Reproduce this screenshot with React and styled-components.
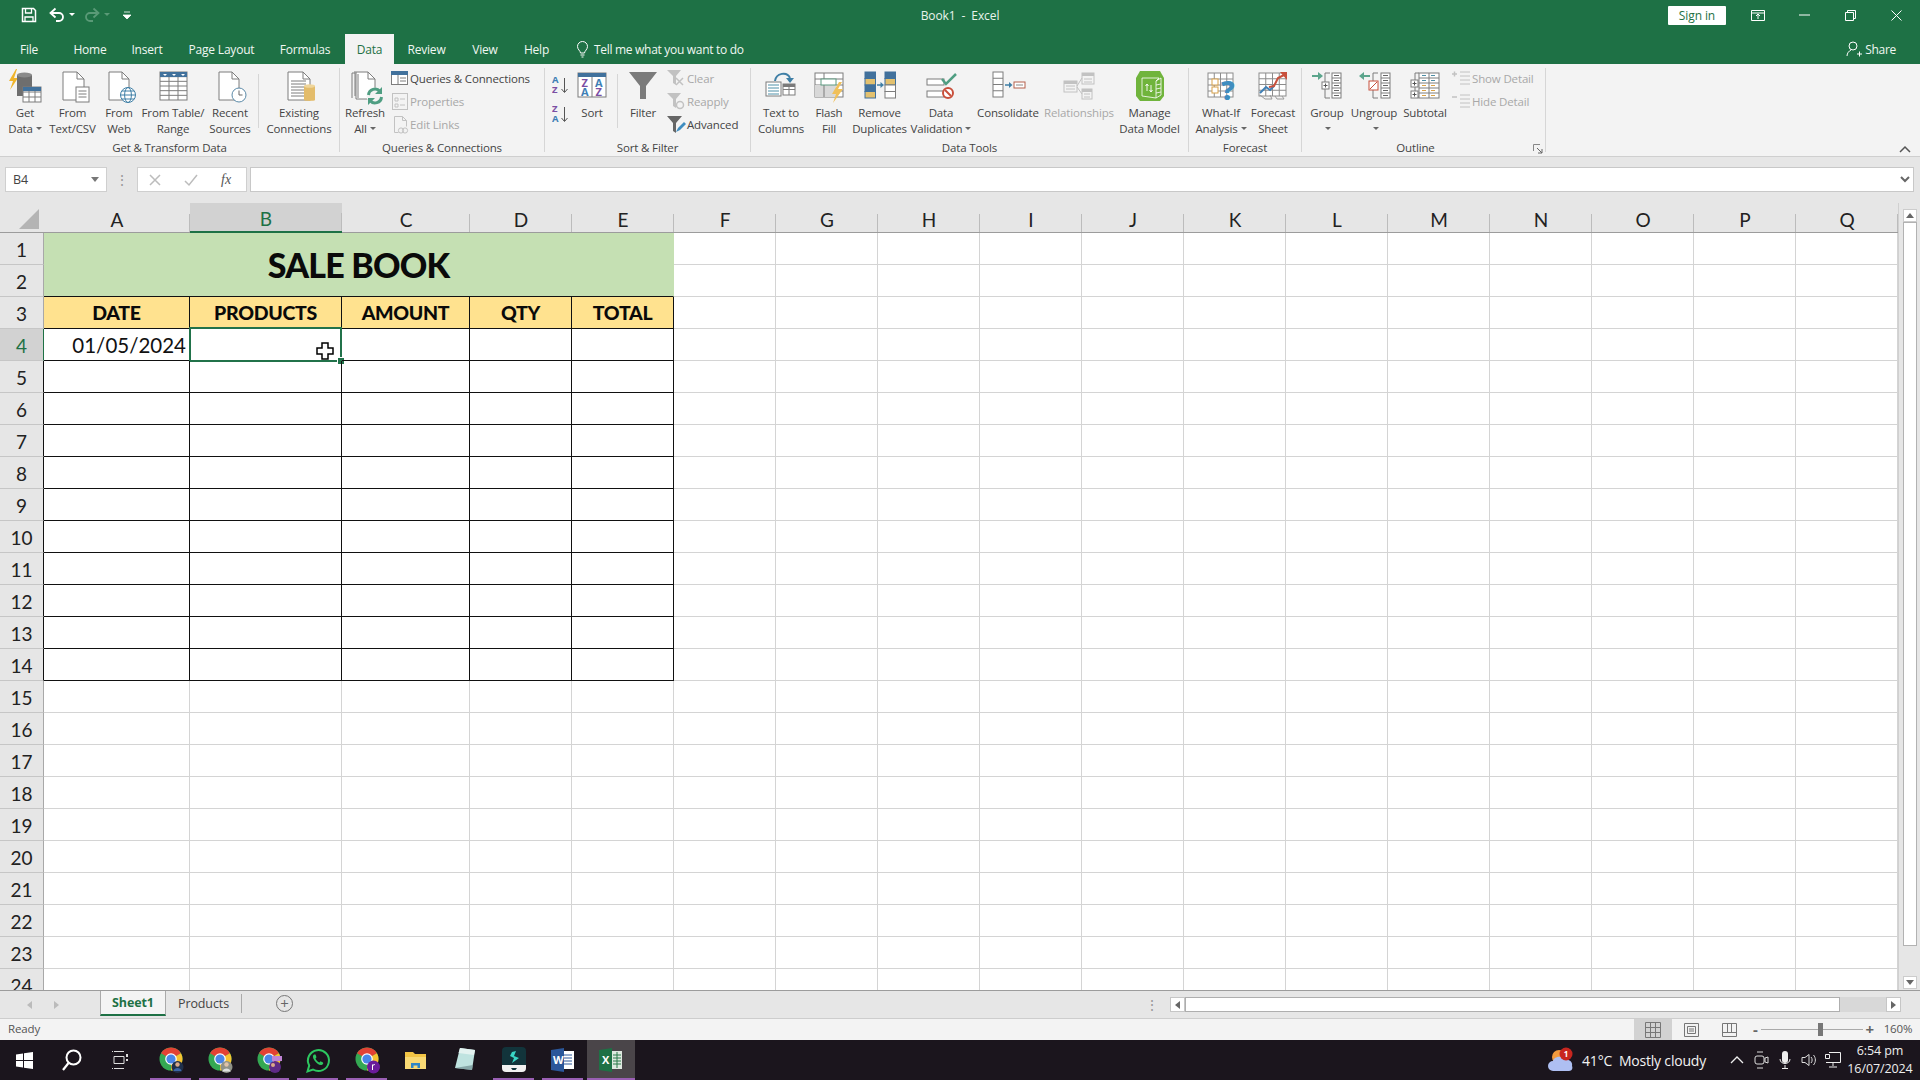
import React from 'react';
import styled, { createGlobalStyle } from 'styled-components';

const UI = `"Open Sans", "Noto Sans", sans-serif`;
const SHEET = `Lato, "Open Sans", sans-serif`;
const GREEN = '#1e7145';
const LINE = '#7d7d7d';
const OFF = '#c2c2c2';
const BLUE = '#41719c';

const Global = createGlobalStyle`
  html, body { margin: 0; padding: 0; width: 1920px; height: 1080px; overflow: hidden; background: #fff; }
  * { box-sizing: border-box; }
`;

const Page = styled.div`
  width: 1920px; height: 1080px; display: flex; flex-direction: column;
  font-family: ${UI}; color: #333; overflow: hidden;
`;

/* ---------- title bar ---------- */
const TitleBar = styled.header`
  height: 34px; background: ${GREEN}; color: #fff; display: grid;
  grid-template-columns: 1fr auto 1fr; align-items: center; padding-bottom: 4px;
`;
const Quick = styled.div`display: flex; align-items: center; padding-left: 21px;`;
const DocName = styled.div`font-size: 12px; letter-spacing: -.1px; color: #e8f3ec; white-space: pre;`;
const WindowTools = styled.div`display: flex; align-items: center; justify-content: flex-end; padding-right: 1px;`;
const SignIn = styled.button`
  width: 58px; height: 19px; margin-right: 9px; border: 0; border-radius: 1px; background: #fff; color: ${GREEN};
  font: 12px ${UI}; letter-spacing: -.1px; padding: 0;
`;
const WinBtn = styled.div`width: 46px; height: 30px; display: flex; align-items: center; justify-content: center;`;

/* ---------- tab strip ---------- */
const TabStrip = styled.nav`height: 30px; background: ${GREEN}; display: flex; align-items: stretch;`;
const Tab = styled.div`
  width: ${p => p.$w}px; margin-right: ${p => p.$gap || 0}px; display: flex; align-items: center; justify-content: center;
  font-size: 12px; letter-spacing: -.2px; padding-top: 1px;
  color: ${p => (p.$on ? GREEN : '#f0f7f2')}; background: ${p => (p.$on ? '#f3f3f3' : 'transparent')};
`;
const TellMe = styled.div`display: flex; align-items: center; gap: 6px; margin-left: 15px; font-size: 12px; letter-spacing: -.3px; color: #f0f7f2;`;
const Share = styled.div`margin-left: auto; margin-right: 24px; display: flex; align-items: center; gap: 3px; color: #f0f7f2; font-size: 12px; letter-spacing: -.3px;`;

/* ---------- ribbon ---------- */
const Ribbon = styled.section`
  height: 93px; flex: none; background: #f3f3f3; border-bottom: 1px solid #cfcfcf; padding-top: 4px; display: flex; position: relative;
`;
const Group = styled.div`
  width: ${p => p.$w}px; height: 84px; flex: none; border-right: 1px solid #d6d6d6; padding-left: ${p => p.$pad || 0}px; display: flex; flex-direction: column;
`;
const GroupBody = styled.div`height: 72px; display: flex; align-items: flex-start;`;
const GroupLabel = styled.div`
  height: 12px; line-height: 16px; text-align: center; font-size: 11.5px; letter-spacing: -.15px; color: #444;
  margin-left: ${p => (p.$pad ? -p.$pad : 0)}px; padding-right: ${p => p.$right || 0}px; white-space: nowrap;
`;
const Big = styled.div`
  width: ${p => p.$w}px; flex: none; display: flex; flex-direction: column; align-items: center; margin-left: ${p => p.$ml || 0}px;
`;
const BigText = styled.div`
  font-size: 11.5px; line-height: 16px; letter-spacing: -.15px; text-align: center; white-space: nowrap;
  color: ${p => (p.$off ? '#a8a8a8' : '#444')};
`;
const Caret = styled.span`
  display: inline-block; width: 0; height: 0; margin: 0 0 2px 3px; vertical-align: middle;
  border-left: 3px solid transparent; border-right: 3px solid transparent; border-top: 3px solid #666;
`;
const RibbonRule = styled.div`width: 1px; height: 54px; margin: 6px ${p => p.$m || 2}px 0; background: #d6d6d6; flex: none;`;
const SmallCol = styled.div`display: flex; flex-direction: column; margin: -1px 0 0 ${p => p.$ml || 0}px;`;
const Small = styled.div`
  height: 23px; display: flex; align-items: center; font-size: 11.5px; letter-spacing: -.15px; white-space: nowrap;
  color: ${p => (p.$off ? '#a8a8a8' : '#444')};
`;
const SortCol = styled.div`display: flex; flex-direction: column; gap: 7px; margin: 6px 1px 0 7px;`;
const Chevron = styled.div`position: absolute; right: 8px; bottom: 2px; width: 14px; height: 10px;`;
const Launcher = styled.svg`position: absolute; left: 1533px; top: 80px; width: 10px; height: 10px;`;

const Ico = styled.svg.attrs({ viewBox: '0 0 48 37', fill: 'none' })`width: 48px; height: 37px; flex: none; overflow: visible;`;
const Sm = styled.svg.attrs({ viewBox: '0 0 20 20', fill: 'none' })`width: 20px; height: 20px; flex: none; overflow: visible;`;

/* ---------- formula bar ---------- */
const FormulaBar = styled.div`height: 46px; flex: none; background: #e6e6e6; padding: 10px 6px 11px 5px; display: flex; align-items: stretch;`;
const NameBox = styled.div`
  width: 102px; background: #fff; border: 1px solid #cfcfcf; display: flex; align-items: center; justify-content: space-between;
  padding: 0 7px; font-size: 12.5px; color: #444;
`;
const Grip = styled.div`width: 30px; display: flex; align-items: center; justify-content: center; color: #999; font-size: 14px;`;
const FxBox = styled.div`
  width: 110px; background: #fff; border: 1px solid #cfcfcf; display: flex; align-items: center; gap: 23px; padding-left: 11px;
`;
const FxLabel = styled.span`font: italic 14px "Liberation Serif", serif; color: #555;`;
const FormulaInput = styled.div`flex: 1; margin-left: 3px; background: #fff; border: 1px solid #c8c8c8; display: flex; align-items: center; justify-content: flex-end; padding-right: 2px;`;

/* ---------- sheet ---------- */
const SheetWrap = styled.div`height: 787px; flex: none; display: flex; background: #fff; overflow: hidden;`;
const Grid = styled.div`
  width: 1898px; flex: none; display: grid; height: 787px; overflow: hidden; font-family: ${SHEET};
  grid-template-columns: 44px 146px 152px 128px repeat(14, 102px);
  grid-template-rows: 30px repeat(24, 32px);
`;
const Corner = styled.div`background: #e6e6e6; border-bottom: 1px solid #9c9c9c; display: flex; align-items: flex-end; justify-content: flex-end; padding: 0 3px 3px 0;`;
const ColHead = styled.div`
  display: flex; align-items: center; justify-content: center; padding-top: 3px; font-size: 19px;
  background-color: ${p => (p.$on ? '#d2d2d2' : '#e6e6e6')};
  background-image: linear-gradient(#bcbcbc, #bcbcbc); background-size: 1px 18px; background-position: right bottom; background-repeat: no-repeat;
  color: ${p => (p.$on ? GREEN : '#222')};
  border-bottom: ${p => (p.$on ? `2px solid ${GREEN}` : '1px solid #9c9c9c')};
`;
const RowHead = styled.div`
  display: flex; align-items: center; justify-content: center; font-size: 19px; padding-top: 1px;
  background: ${p => (p.$on ? '#d2d2d2' : '#e6e6e6')}; color: ${p => (p.$on ? GREEN : '#222')};
  border-bottom: 1px solid #c6c6c6;
  border-right: 1px solid ${p => (p.$on ? GREEN : p.$ink ? '#111' : '#a8a8a8')};
`;
const Cell = styled.div`
  border-right: 1px solid ${p => (p.$ink ? '#111' : '#d4d4d4')};
  border-bottom: 1px solid ${p => (p.$ink ? '#111' : '#d4d4d4')};
  position: relative; display: flex; align-items: center; justify-content: flex-end; padding-right: 3px;
  font-size: 20.5px; color: #111;
`;
const Title = styled.div`
  grid-column: 2 / span 5; grid-row: span 2; background: #c5e0b3; border-bottom: 1px solid #111; border-right: 1px solid #c5e0b3;
  display: flex; align-items: center; justify-content: center; font-size: 34px; font-weight: 900; color: #0a0a0a; letter-spacing: -.8px;
`;
const ColTitle = styled.div`
  background: #ffe28f; border-right: 1px solid #111; border-bottom: 1px solid #111;
  display: flex; align-items: center; justify-content: center; font-size: 19.5px; font-weight: 900; color: #0a0a0a; letter-spacing: -.3px;
`;
const Selection = styled.div`position: absolute; left: -1px; top: -2px; right: -1px; bottom: -2px; border: 2px solid #21724a;`;
const Handle = styled.div`position: absolute; right: -4px; bottom: -4px; width: 6px; height: 6px; background: #21724a; border: 1px solid #fff; box-sizing: content-box; margin: -1px;`;
const Cursor = styled.svg`position: absolute; left: 126px; top: 13px; width: 18px; height: 18px;`;

const VScroll = styled.div`width: 22px; flex: none; background: #e6e6e6; border-left: 1px solid #d0d0d0; padding: 6px 3px 1px 4px; display: flex; flex-direction: column; align-items: stretch;`;
const ScrollBtn = styled.div`height: 13px; background: #fff; border: 1px solid #ccc; display: flex; align-items: center; justify-content: center;`;
const VThumb = styled.div`height: 724px; background: #fff; border: 1px solid #b2b2b2;`;
const VTrack = styled.div`flex: 1;`;

/* ---------- sheet tabs ---------- */
const TabsBar = styled.div`height: 29px; flex: none; background: #e6e6e6; border-top: 1px solid #9c9c9c; border-bottom: 1px solid #cdcdcd; display: flex; align-items: stretch; color: #555;`;
const NavArrows = styled.div`width: 100px; display: flex; align-items: center; gap: 22px; padding-left: 27px;`;
const SheetTab = styled.div`
  width: ${p => p.$w}px; height: 25px; display: flex; align-items: center; justify-content: center; font-size: 12.5px; letter-spacing: -.1px;
  ${p => (p.$on
    ? `background:#f4f4f4; color:${GREEN}; font-weight:700; border-bottom:2px solid ${GREEN}; border-left:1px solid #aaa; border-right:1px solid #aaa;`
    : 'color:#444; border-right:1px solid #aaa; height: 19px; margin-top: 3px;')}
`;
const AddSheet = styled.div`margin-left: 34px; width: 17px; height: 17px; margin-top: 4px; border: 1.5px solid #777; border-radius: 50%; display: flex; align-items: center; justify-content: center; font-size: 15px; line-height: 1; color: #666; font-weight: 400;`;
const HDots = styled.div`margin-left: auto; margin-right: 9px; width: 18px; display: flex; align-items: center; justify-content: center; color: #999; font-size: 14px;`;
const HScroll = styled.div`width: 731px; height: 15px; margin: 6px 19px 0 0; display: flex;`;
const HBtn = styled.div`width: ${p => p.$w}px; background: #fff; border: 1px solid #c6c6c6; display: flex; align-items: center; justify-content: center;`;
const HThumb = styled.div`width: 655px; background: #fff; border: 1px solid #aeaeae;`;
const HTrack = styled.div`flex: 1; background: #d8d8d8;`;
const Tri = styled.span`
  width: 0; height: 0; border-top: 4px solid transparent; border-bottom: 4px solid transparent;
  ${p => (p.$dir === 'l' ? `border-right: 5px solid ${p.$c || '#666'};` : `border-left: 5px solid ${p.$c || '#666'};`)}
`;

/* ---------- status bar ---------- */
const Status = styled.div`height: 21px; flex: none; background: #f3f3f3; display: flex; align-items: center; font-size: 11.5px; letter-spacing: -.15px; color: #555;`;
const Ready = styled.span`margin-left: 8px; padding-bottom: 3px;`;
const Views = styled.div`margin-left: auto; display: flex; align-items: stretch; height: 100%;`;
const ViewBtn = styled.div`width: 38px; display: flex; align-items: center; justify-content: center; background: ${p => (p.$on ? '#d2d2d2' : 'transparent')};`;
const ZoomCtl = styled.div`display: flex; align-items: center; margin-left: 5px; width: 121px; gap: 3px;`;
const ZoomSign = styled.span`font-size: 15px; font-weight: 700; color: #666; line-height: 1;`;
const ZoomTrack = styled.div`flex: 1; height: 1px; background: #aaa; position: relative;`;
const ZoomKnob = styled.div`position: absolute; left: 57px; top: -6px; width: 5px; height: 13px; background: #777;`;
const ZoomPct = styled.span`width: 36px; margin: 0 4px 2px 6px; align-self: center; text-align: center; font-size: 11.5px;`;

/* ---------- taskbar ---------- */
const Taskbar = styled.footer`height: 40px; flex: none; background: #1b151d; display: flex; align-items: stretch; color: #eee;`;
const Slot = styled.div`
  width: ${p => p.$w || 49}px; flex: none; display: flex; align-items: center; justify-content: center; position: relative;
  background: ${p => (p.$on ? '#4a4549' : 'transparent')};
  ${p => p.$run && `&::after { content: ''; position: absolute; bottom: 0; left: ${p.$on ? 0 : 4}px; right: ${p.$on ? 0 : 4}px; height: 2px; background: #9a5fb4; }`}
`;
const SlotGap = styled.div`width: 2px; flex: none;`;
const Tray = styled.div`margin-left: auto; display: flex; align-items: center; height: 100%;`;
const Weather = styled.div`display: flex; align-items: center; gap: 8px; font-size: 14px; letter-spacing: -.2px; color: #f2f2f2; margin-right: 21px;`;
const TrayIcons = styled.div`display: flex; align-items: center; gap: 4px;`;
const TrayBox = styled.div`width: 20px; display: flex; justify-content: center;`;
const Clock = styled.div`display: flex; flex-direction: column; align-items: center; font-size: 12.5px; line-height: 18px; width: 74px; margin-right: 3px; letter-spacing: -.1px;`;

/* ---------- icon helpers ---------- */
function Tbl({ x, y, w, h, cols = 1, rows = 1, c = LINE, fill = '#fff', head }) {
  const ls = [];
  for (let i = 1; i < cols; i++) ls.push(<path key={`c${i}`} d={`M${x + (w * i) / cols} ${y}v${h}`} />);
  for (let i = 1; i < rows; i++) ls.push(<path key={`r${i}`} d={`M${x} ${y + (h * i) / rows}h${w}`} />);
  return (
    <g stroke={c} strokeWidth="1">
      <rect x={x} y={y} width={w} height={h} fill={fill} />
      {ls}
      {head && <rect x={x} y={y} width={w} height={h / rows} fill={head} stroke={head} />}
    </g>
  );
}
function Doc({ x, y, w, h, c = LINE }) {
  return (
    <g stroke={c}>
      <path d={`M${x} ${y}h${w - 7}l7 7v${h - 7}h${-w}z`} fill="#fff" />
      <path d={`M${x + w - 7} ${y}v7h7`} />
    </g>
  );
}
const Lines = ({ x, y, w, n, step = 3, c = LINE }) => (
  <g stroke={c}>
    {Array.from({ length: n }, (_, i) => <path key={i} d={`M${x} ${y + i * step}h${w}`} />)}
  </g>
);

const GetDataIcon = () => (
  <Ico>
    <path d="M15 1 8 13h4l-3 9 8-12h-4l3-9z" fill="#f0b429" />
    <path d="M16 7v21h15V7z" fill="#6e6e6e" />
    <ellipse cx="23.5" cy="7" rx="7.5" ry="2.6" fill="#8a8a8a" />
    <Tbl x={22} y={19} w={18} h={15} cols={3} rows={3} />
    <rect x="22" y="19" width="18" height="4" fill={BLUE} />
  </Ico>
);
const TextCsvIcon = () => (
  <Ico>
    <Doc x={14} y={4} w={21} h={28} />
    <rect x="27" y="19" width="13" height="15" fill="#fff" stroke={LINE} />
    <Lines x={29.5} y={23} w={8} n={3} />
  </Ico>
);
const WebIcon = () => (
  <Ico>
    <Doc x={14} y={4} w={20} h={28} />
    <circle cx="33" cy="27" r="7.5" fill="#fff" stroke="#3f7fa6" />
    <ellipse cx="33" cy="27" rx="3.4" ry="7.5" stroke="#3f7fa6" />
    <path d="M25.5 27h15M27 23h12M27 31h12" stroke="#3f7fa6" />
  </Ico>
);
const TableIcon = () => (
  <Ico>
    <Tbl x={11} y={4} w={27} h={28} cols={3} rows={6} />
    <rect x="11" y="4" width="27" height="5" fill={BLUE} />
    <path d="M14 6h4l-2 2zM23 6h4l-2 2zM32 6h4l-2 2z" fill="#fff" />
  </Ico>
);
const RecentIcon = () => (
  <Ico>
    <Doc x={13} y={4} w={20} h={28} />
    <circle cx="33" cy="27" r="7" fill="#fff" stroke="#5b8aa8" />
    <path d="M33 22.5V27h3.5" stroke="#666" />
  </Ico>
);
const ExistingIcon = () => (
  <Ico>
    <Doc x={13} y={4} w={22} h={28} />
    <Lines x={16} y={13} w={15} n={6} />
    <path d="M29 18v14c0 1.2 11 1.2 11 0V18z" fill="#e3bc6b" />
    <ellipse cx="34.5" cy="18" rx="5.5" ry="1.8" fill="#efd59a" />
  </Ico>
);
const RefreshIcon = () => (
  <Ico>
    <path d="M11 5v25M11 5h3M14 3v25" stroke={LINE} />
    <Doc x={15} y={4} w={19} h={27} />
    <path d="M17 6v24" stroke={LINE} />
    <circle cx="34" cy="28" r="8.5" fill="#f3f3f3" />
    <path d="M27.5 27a6.5 6.5 0 0 1 11.5-3.5M40.5 29a6.5 6.5 0 0 1-11.5 3.5" stroke="#4f9e82" strokeWidth="3" />
    <path d="M41 19v7h-7zM27 37v-7h7z" fill="#4f9e82" />
  </Ico>
);
const SortLetters = styled.text`font: 700 11px ${UI};`;
const SortIcon = () => (
  <Ico>
    <rect x="10" y="5" width="28" height="24" fill="#fff" stroke={LINE} />
    <rect x="10" y="5" width="28" height="4" fill={BLUE} />
    <path d="M24 9v20" stroke={LINE} />
    <SortLetters x="13.5" y="18.5" fill="#7b4fa3">Z</SortLetters>
    <SortLetters x="27" y="18.5" fill="#3f7fb5">A</SortLetters>
    <SortLetters x="13" y="28" fill="#3f7fb5">A</SortLetters>
    <SortLetters x="27.5" y="28" fill="#7b4fa3">Z</SortLetters>
  </Ico>
);
const AzSvg = styled.svg.attrs({ viewBox: '0 0 18 22', fill: 'none' })`width: 18px; height: 22px; display: block;`;
const AzText = styled.text`font: 700 9.5px ${UI};`;
const AzIcon = ({ top, bottom, tc, bc }) => (
  <AzSvg>
    <AzText x="0" y="9" fill={tc}>{top}</AzText>
    <AzText x="0" y="19" fill={bc}>{bottom}</AzText>
    <path d="M12.5 4v14M9.5 15l3 3.5 3-3.5" stroke="#555" />
  </AzSvg>
);
const FilterIcon = () => (
  <Ico><path d="M10 4h28L27 18v13h-6V18z" fill="#7b7b7b" /></Ico>
);
const TextColsIcon = () => (
  <Ico>
    <path d="M18 13c1-8 12-10 15-3" stroke="#3f7fa6" strokeWidth="2" />
    <path d="M29 10h8l-4 5z" fill="#3f7fa6" />
    <rect x="9" y="14" width="15" height="14" fill="#fff" stroke={LINE} />
    <Lines x={11} y={17} w={11} n={4} c="#4f90a8" />
    <Tbl x={26} y={16} w={12} h={11} cols={2} rows={2} />
    <rect x="26" y="16" width="12" height="3" fill="#7a7a7a" />
  </Ico>
);
const FlashIcon = () => (
  <Ico>
    <Tbl x={10} y={5} w={28} h={24} cols={1} rows={4} />
    <rect x="10" y="17" width="21" height="12" fill="#d8d8d8" />
    <path d="M19 5v24" stroke={LINE} />
    <rect x="16" y="11" width="15" height="6" fill="#fff" stroke="#5c9a80" />
    <path d="M34 14l-7 12h4l-3 9 10-14h-5l4-7z" fill="#f0c05a" />
  </Ico>
);
const ColStack = ({ x, y = 4, w = 10.5, colors }) => (
  <g>
    {colors.map((c, i) => <rect key={i} x={x} y={y + i * 6.5} width={w} height={6.5} fill={c} stroke={c === '#fff' ? LINE : '#41719c'} />)}
  </g>
);
const DupIcon = () => (
  <Ico>
    <ColStack x={9} colors={[BLUE, '#e3c16f', BLUE, '#e3c16f']} />
    <ColStack x={29} colors={[BLUE, '#e3c16f', '#fff', '#fff']} />
    <path d="M21 17h5" stroke="#3f7fa6" strokeWidth="1.5" />
    <path d="M24.5 14l3.5 3-3.5 3z" fill="#3f7fa6" />
  </Ico>
);
const ValidIcon = () => (
  <Ico>
    <rect x="10" y="11" width="17" height="6" fill="#fff" stroke={LINE} />
    <rect x="10" y="23" width="17" height="6" fill="#fff" stroke={LINE} />
    <path d="M25 11l4 5 10-10" stroke="#4f9e82" strokeWidth="2.5" />
    <circle cx="31" cy="25" r="5" fill="#fff" stroke="#c8503c" strokeWidth="2" />
    <path d="M28 22l6 6" stroke="#c8503c" strokeWidth="2" />
  </Ico>
);
const ConsolIcon = () => (
  <Ico>
    <Tbl x={9} y={4} w={10} h={25} rows={4} />
    <path d="M21 17h5" stroke="#3f7fa6" strokeWidth="1.5" />
    <path d="M25 14l3.5 3-3.5 3z" fill="#3f7fa6" />
    <rect x="30" y="14" width="11" height="6" fill="#fff" stroke="#b5604c" />
    <path d="M32 17h7" stroke="#888" />
  </Ico>
);
const RelIcon = () => (
  <Ico>
    <g stroke={OFF}>
      <rect x="9" y="13" width="13" height="11" fill="#f3f3f3" />
      <path d="M11 18h9M11 21h9" />
      <rect x="27" y="5" width="12" height="11" fill="#f3f3f3" />
      <path d="M29 11h8M29 14h8" />
      <rect x="27" y="21" width="10" height="10" fill="#f3f3f3" />
      <path d="M29 26h6M29 29h6" />
      <path d="M22 18l5-8M22 19l5 7" />
    </g>
    <rect x="27" y="5" width="12" height="3" fill={OFF} />
    <rect x="9" y="13" width="13" height="3" fill={OFF} />
    <rect x="27" y="21" width="10" height="3" fill={OFF} />
  </Ico>
);
const ModelIcon = () => (
  <Ico>
    <path d="M14 3h20l4 7v18l-4 5H14l-4-5V10z" fill="#70b43c" />
    <path d="M16 10h17l-3 3v17l-14-2zM30 13l5-3v17l-5 3" stroke="#fff" strokeWidth=".8" />
    <path d="M30 17l5-1M30 21l5-1M30 25l5-1" stroke="#fff" strokeWidth=".8" />
    <path d="M21 16v7M25 24v-7M19.5 18l1.5-2 1.5 2M23.5 22l1.5 2 1.5-2" stroke="#fff" strokeWidth=".9" />
  </Ico>
);
const QMark = styled.text`font: 800 27px ${UI};`;
const WhatIfIcon = () => (
  <Ico>
    <Tbl x={11} y={5} w={25} h={24} cols={4} rows={4} c="#8c8c8c" />
    <rect x="15" y="11" width="6" height="6" fill="#fff" stroke="#d9a24a" />
    <rect x="15" y="19" width="6" height="6" fill="#fff" stroke="#d9a24a" />
    <QMark x="24" y="32" fill="#3f8dc0">?</QMark>
  </Ico>
);
const ForecastIcon = () => (
  <Ico>
    <Tbl x={10} y={5} w={27} h={23} cols={4} rows={4} c="#8c8c8c" />
    <path d="M11 27l5 4h7l-2-4M26 28l2 3h7l-2-3" stroke="#9a9a9a" />
    <path d="M11 25l6-6 4 3 4-4" stroke="#3f7fb5" strokeWidth="2" />
    <path d="M20 19l5-1 4-8 6-3" stroke="#c8503c" strokeWidth="2" />
    <path d="M31 4h7v8z" fill="#c8503c" />
  </Ico>
);
const Bracket = ({ x, y = 5, h = 25 }) => (
  <path d={`M${x + 5} ${y}h-5v${h}h5`} stroke={LINE} />
);
const Stack = ({ x, w = 9, y = 5, n = 5 }) => (
  <g stroke={LINE}>
    <rect x={x} y={y} width={w} height={n * 5} fill="#fff" />
    {Array.from({ length: n - 1 }, (_, i) => <path key={i} d={`M${x} ${y + 5 * (i + 1)}h${w}`} />)}
    {Array.from({ length: n }, (_, i) => <path key={`d${i}`} d={`M${x + 2} ${y + 2.5 + 5 * i}h${w - 4}`} stroke="#666" />)}
  </g>
);
const GroupIcon = () => (
  <Ico>
    <path d="M9 8h8" stroke="#5ba58c" strokeWidth="2" />
    <path d="M15 4l5 4-5 4z" fill="#5ba58c" />
    <Bracket x={22} />
    <rect x="19" y="14" width="7" height="7" fill="#fff" stroke={LINE} />
    <path d="M20.5 17.5h4M22.5 15.5v4" stroke="#555" />
    <Stack x={29} />
  </Ico>
);
const UngroupIcon = () => (
  <Ico>
    <path d="M12 8h8" stroke="#5ba58c" strokeWidth="2" />
    <path d="M14 4l-5 4 5 4z" fill="#5ba58c" />
    <Bracket x={23} />
    <rect x="19" y="13" width="9" height="9" fill="#fff" stroke="#c8503c" />
    <path d="M20 21l7-7" stroke="#c8503c" />
    <Stack x={31} />
  </Ico>
);
const SubtotalIcon = () => (
  <Ico>
    <path d="M14 5v24h4M14 5h4" stroke={LINE} />
    <rect x="10" y="12" width="7" height="7" fill="#fff" stroke={LINE} />
    <rect x="10" y="23" width="7" height="7" fill="#fff" stroke={LINE} />
    <path d="M11.5 15.5h4M13.5 13.5v4M11.5 26.5h4M13.5 24.5v4" stroke="#555" />
    <Tbl x={18} y={5} w={20} h={25} cols={2} rows={5} />
    <path d="M21 7.5h4M30 7.5h4M21 12.5h4M30 12.5h4" stroke="#4f8fa6" />
    <path d="M21 17.5h4M30 17.5h4M21 22.5h4M30 22.5h4M21 27.5h4M30 27.5h4" stroke="#d9a24a" />
  </Ico>
);
const QueriesSm = () => (
  <Sm>
    <rect x="1.5" y="2.5" width="16" height="13" fill="#fff" stroke={LINE} />
    <rect x="1.5" y="2.5" width="16" height="3" fill={BLUE} stroke={BLUE} />
    <path d="M8 6v9M10 9h6M10 12h6" stroke={LINE} />
  </Sm>
);
const PropsSm = () => (
  <Sm>
    <rect x="2.5" y="1.5" width="15" height="16" stroke={OFF} />
    <path d="M5 6h3v3H5zM5 12h3v3H5zM10 7h5M10 13h5" stroke={OFF} />
  </Sm>
);
const LinksSm = () => (
  <Sm>
    <path d="M4.5 1.5h8l4 4v6M4.5 1.5v16h4" stroke={OFF} />
    <path d="M12.5 1.5v4h4" stroke={OFF} />
    <circle cx="11" cy="15.5" r="2.6" stroke={OFF} />
    <circle cx="15" cy="15.5" r="2.6" stroke={OFF} />
  </Sm>
);
const ClearSm = () => (
  <Sm>
    <path d="M0 1h14L9 7v9l-3-2V7z" fill={OFF} />
    <path d="M9 9l7 7M16 9l-7 7" stroke={OFF} strokeWidth="1.5" />
  </Sm>
);
const ReapplySm = () => (
  <Sm>
    <path d="M0 1h14L9 7v9l-3-2V7z" fill={OFF} />
    <circle cx="13" cy="13" r="3.5" stroke={OFF} strokeWidth="1.5" />
  </Sm>
);
const AdvancedSm = () => (
  <Sm>
    <path d="M0 1h15L9 8v10l-3-2V8z" fill="#666" />
    <path d="M9 17l2-4 6-6 2 2-6 6z" fill="#3f8dc0" />
  </Sm>
);
const ShowSm = () => (
  <Sm>
    <path d="M8 3h10M8 7h10M8 11h10M8 15h10" stroke={OFF} />
    <path d="M0 5h5M2.5 2.5v5" stroke={OFF} strokeWidth="1.5" />
  </Sm>
);
const HideSm = () => (
  <Sm>
    <path d="M8 3h10M8 7h10M8 11h10M8 15h10" stroke={OFF} />
    <path d="M0 5h5" stroke={OFF} strokeWidth="1.5" />
  </Sm>
);

/* ---------- top-level small svg ---------- */
const S = styled.svg.attrs(p => ({ viewBox: `0 0 ${p.$w} ${p.$h}`, fill: 'none' }))`
  width: ${p => p.$w}px; height: ${p => p.$h}px; flex: none; display: block; overflow: visible;
`;
const Qat = styled.div`display: flex; align-items: center; gap: 4px; width: ${p => p.$w}px; justify-content: ${p => p.$mid ? 'center' : 'flex-start'};`;

const SaveIcon = () => (
  <S $w={16} $h={16}>
    <path d="M1.5 1.5h11l2 2v11h-13z" stroke="#fff" strokeWidth="1.5" />
    <path d="M4.5 2v4h6V2M4 15v-5h8v5" stroke="#fff" strokeWidth="1.3" />
  </S>
);
const UndoIcon = ({ c }) => (
  <S $w={16} $h={16}>
    <path d="M3 6h7a3.5 3.5 0 0 1 0 8H7" stroke={c} strokeWidth="1.8" />
    <path d="M6.5 1.500 1.500 6l5 4.500" stroke={c} strokeWidth="1.8" />
  </S>
);
const RedoIcon = ({ c }) => (
  <S $w={16} $h={16}>
    <path d="M13 6H6a3.5 3.5 0 0 0 0 8h3" stroke={c} strokeWidth="1.8" />
    <path d="M9.5 1.5l5 4.5-5 4.5" stroke={c} strokeWidth="1.8" />
  </S>
);
const MiniCaret = ({ c }) => (
  <S $w={7} $h={4}><path d="M0 0h6L3 3z" fill={c} /></S>
);

const ChromeIcon = ({ badge }) => (
  <S $w={24} $h={26}>
    <circle cx="12" cy="12" r="11.5" fill="#34a853" />
    <path d="M12 12 2.05 6.25A11.5 11.5 0 0 1 21.95 6.25Z" fill="#e34234" />
    <path d="M12 12 21.95 6.25A11.5 11.5 0 0 1 12 23.5Z" fill="#f7c331" />
    <circle cx="12" cy="12" r="5.8" fill="#fff" />
    <circle cx="12" cy="12" r="4.6" fill="#4a86e8" />
    {badge === 'a' && (<g><circle cx="18.5" cy="20" r="6" fill="#20304a" /><circle cx="18.5" cy="17.5" r="2.2" fill="#d9a98a" /><path d="M14.5 24c.5-4 7.5-4 8 0z" fill="#3c66a8" /></g>)}
    {badge === 'b' && (<g><circle cx="18.5" cy="20" r="6" fill="#8f9288" /><circle cx="18.5" cy="17.5" r="2.2" fill="#e0c3a8" /><path d="M14.5 24.5c.5-4 7.5-4 8 0z" fill="#dfe2e0" /></g>)}
    {badge === 'c' && (<g><circle cx="18" cy="20" r="6" fill="#5e2a86" /><rect x="15" y="9" width="10" height="5" fill="#c184d6" /><circle cx="16" cy="18" r="2" fill="#d9a98a" /></g>)}
    {badge === 'r' && (<g><circle cx="18.5" cy="20" r="6.5" fill="#6a1b9a" /><path d="M17.5 23v-5.5M17.5 19c.6-1.2 1.500-1.500 2.500-1.400" stroke="#fff" /></g>)}
  </S>
);
const WinLogo = () => (
  <S $w={17} $h={17}><path d="M0 2.4 7 1.4v6.6H0zM8 1.2 17 0v8H8zM0 9h7v6.6l-7-1zM8 9h9v8l-9-1.2z" fill="#fff" /></S>
);
const SearchIcon = () => (
  <S $w={20} $h={22}><circle cx="11.5" cy="8.5" r="7" stroke="#fff" strokeWidth="2" /><path d="M6.5 14 1 21" stroke="#fff" strokeWidth="2.2" /></S>
);
const TaskView = () => (
  <S $w={17} $h={18}><path d="M2 .5h10M2 17.5h10M2 5.5h10v7H2zM0 .5h1M0 17.5h1" stroke="#ddd" /><path d="M14 3h2v3h-2zM14 8h2v2h-2z" fill="#ddd" /></S>
);
const WhatsApp = () => (
  <S $w={24} $h={25}>
    <path d="M1.5 23.5l1.7-6A10.5 10.5 0 1 1 7 21.5z" stroke="#2dc760" strokeWidth="2" />
    <path d="M8 6.5c-1.5 1-1.5 3 .5 6s5 5 7 4.500c1.500-.4 2-1.500 1.500-2.500l-2.500-1.300-1 1.200c-1.500-.4-3.500-2.300-4-4l1-1.100L9.500 6.500z" fill="#2dc760" />
  </S>
);
const FolderIcon = () => (
  <S $w={22} $h={22}>
    <path d="M0 3h8l2 2h11v15H0z" fill="#f3c445" />
    <path d="M0 8h21v12H0z" fill="#f9d974" />
    <path d="M6 19v-5h9v5h-2.5v-2.5h-4V19z" fill="#2f86c5" />
  </S>
);
const NotepadIcon = () => (
  <S $w={24} $h={26}>
    <path d="M7 1 22 3l-3 20-17-2z" fill="#bfe3e0" />
    <path d="M7 1 22 3l-1 5L5.5 6z" fill="#e3f2f0" />
    <path d="M2 21l17 2 1-5z" fill="#6f8f92" opacity=".7" />
  </S>
);
const FilmoraIcon = () => (
  <S $w={24} $h={27}>
    <path d="M0 4a4 4 0 0 1 4-4h16a4 4 0 0 1 4 4v14H0z" fill="#12343b" />
    <path d="M0 18h24v3a4 4 0 0 1-4 4H4a4 4 0 0 1-4-4z" fill="#f2f2f2" />
    <path d="M9 21h6l-1.5 2h-3z" fill="#12343b" />
    <path d="M10 5l4-1-2 5 5 2-7 5 2-5-4-2z" fill="#39d6c6" />
  </S>
);
const OfficeLetter = styled.text`font: 700 11px ${UI};`;
const WordIcon = () => (
  <S $w={24} $h={24}>
    <path d="M10 3h13v18H10z" fill="#fff" />
    <path d="M13 7h8M13 10h8M13 13h8M13 16h8" stroke="#2b579a" />
    <path d="M0 2l13-2v24L0 22z" fill="#2b579a" />
    <OfficeLetter x="2" y="16" fill="#fff">W</OfficeLetter>
  </S>
);
const ExcelIcon = () => (
  <S $w={24} $h={24}>
    <path d="M10 3h13v18H10z" fill="#dfe9e0" />
    <path d="M14 7h8M14 10h8M14 13h8M14 16h8M18 4v16" stroke="#2a7a4b" />
    <path d="M0 2l13-2v24L0 22z" fill="#1e7145" />
    <OfficeLetter x="3" y="16" fill="#fff">X</OfficeLetter>
  </S>
);
const BadgeNum = styled.text`font: 700 8px ${UI};`;
const WeatherIcon = () => (
  <S $w={24} $h={26}>
    <circle cx="9" cy="10" r="7" fill="#f19a3e" />
    <path d="M3 24a5 5 0 0 1 0-10c1-5 10-6 12-1 4-1 8 2 7 6 1 2 0 5-3 5z" fill="#aebff2" />
    <circle cx="16" cy="7" r="6.5" fill="#c8261f" />
    <BadgeNum x="13.8" y="10" fill="#fff">1</BadgeNum>
  </S>
);

const COLS = 'ABCDEFGHIJKLMNOPQ'.split('');
const HEADS = ['DATE', 'PRODUCTS', 'AMOUNT', 'QTY', 'TOTAL'];
const ROWS = Array.from({ length: 24 }, (_, i) => i + 1);

function Sheet() {
  const cells = [];
  ROWS.forEach(r => {
    cells.push(<RowHead key={`h${r}`} $on={r === 4} $ink={r >= 5 && r <= 14}>{r}</RowHead>);
    if (r === 1) cells.push(<Title key="title">SALE BOOK</Title>);
    COLS.forEach((c, i) => {
      if (r <= 2 && i < 5) return;
      const key = `${c}${r}`;
      if (r === 3 && i < 5) { cells.push(<ColTitle key={key}>{HEADS[i]}</ColTitle>); return; }
      const ink = r >= 4 && r <= 14 && i < 5;
      const sel = c === 'B' && r === 4;
      cells.push(
        <Cell key={key} $ink={ink}>
          {c === 'A' && r === 4 ? '01/05/2024' : null}
          {sel && (
            <>
              <Selection><Handle /></Selection>
              <Cursor viewBox="0 0 18 18">
                <path d="M6 1h6v5h5v6h-5v5H6v-5H1V6h5z" fill="#fff" stroke="#000" strokeWidth="1.5" />
              </Cursor>
            </>
          )}
        </Cell>
      );
    });
  });
  return (
    <SheetWrap>
      <Grid>
        <Corner>
          <S $w={22} $h={20}><path d="M20 0v20H0z" fill="#b4b4b4" /></S>
        </Corner>
        {COLS.map(c => <ColHead key={c} $on={c === 'B'}>{c}</ColHead>)}
        {cells}
      </Grid>
      <VScroll>
        <ScrollBtn><S $w={8} $h={5}><path d="M4 0l4 5H0z" fill="#666" /></S></ScrollBtn>
        <VThumb />
        <VTrack />
        <ScrollBtn><S $w={8} $h={5}><path d="M0 0h8L4 5z" fill="#666" /></S></ScrollBtn>
      </VScroll>
    </SheetWrap>
  );
}

export default function App() {
  return (
    <Page>
      <Global />
      <TitleBar>
        <Quick>
          <Qat $w={28}><SaveIcon /></Qat>
          <Qat $w={35}><UndoIcon c="#fff" /><MiniCaret c="#fff" /></Qat>
          <Qat $w={37}><RedoIcon c="#5a9a77" /><MiniCaret c="#5a9a77" /></Qat>
          <Qat $w={12} $mid>
            <S $w={8} $h={8}><path d="M1 1h6M0 4h8L4 8z" stroke="#fff" fill="#fff" strokeWidth=".8" /></S>
          </Qat>
        </Quick>
        <DocName>Book1  -  Excel</DocName>
        <WindowTools>
          <SignIn>Sign in</SignIn>
          <WinBtn>
            <S $w={14} $h={11}><path d="M.5.5h13v10H.5zM0 3h14M7 9V4.5M5 6l2-2 2 2" stroke="#fff" /></S>
          </WinBtn>
          <WinBtn><S $w={11} $h={2}><path d="M0 1h11" stroke="#fff" /></S></WinBtn>
          <WinBtn><S $w={11} $h={11}><path d="M.5 2.5h8v8h-8zM2.5 2.5v-2h8v8h-2" stroke="#fff" /></S></WinBtn>
          <WinBtn><S $w={11} $h={11}><path d="M.5.5l10 10M10.500.5l-10 10" stroke="#fff" /></S></WinBtn>
        </WindowTools>
      </TitleBar>

      <TabStrip>
        <Tab $w={58}>File</Tab>
        <Tab $w={64}>Home</Tab>
        <Tab $w={50}>Insert</Tab>
        <Tab $w={99}>Page Layout</Tab>
        <Tab $w={68} $gap={6}>Formulas</Tab>
        <Tab $w={49} $on>Data</Tab>
        <Tab $w={65}>Review</Tab>
        <Tab $w={52}>View</Tab>
        <Tab $w={51}>Help</Tab>
        <TellMe>
          <S $w={11} $h={17}>
            <path d="M3.5 12c0-2-3-3.5-3-6.5a5 5 0 0 1 10 0c0 3-3 4.5-3 6.5zM3.5 14h4M4.5 16h2" stroke="#fff" />
          </S>
          Tell me what you want to do
        </TellMe>
        <Share>
          <S $w={16} $h={16}>
            <circle cx="7" cy="5" r="4" stroke="#fff" />
            <path d="M1 15c0-3 2-5 4-6M11 13h5M13.5 10.5v5" stroke="#fff" />
          </S>
          Share
        </Share>
      </TabStrip>

      <Ribbon>
        <Group $w={340}>
          <GroupBody>
            <Big $w={48} $ml={1}><GetDataIcon /><BigText>Get<br />Data<Caret /></BigText></Big>
            <Big $w={47}><TextCsvIcon /><BigText>From<br />Text/CSV</BigText></Big>
            <Big $w={46}><WebIcon /><BigText>From<br />Web</BigText></Big>
            <Big $w={62}><TableIcon /><BigText>From Table/<br />Range</BigText></Big>
            <Big $w={52}><RecentIcon /><BigText>Recent<br />Sources</BigText></Big>
            <RibbonRule />
            <Big $w={76}><ExistingIcon /><BigText>Existing<br />Connections</BigText></Big>
          </GroupBody>
          <GroupLabel>Get &amp; Transform Data</GroupLabel>
        </Group>

        <Group $w={205}>
          <GroupBody>
            <Big $w={44} $ml={3}><RefreshIcon /><BigText>Refresh<br />All<Caret /></BigText></Big>
            <SmallCol $ml={3}>
              <Small><QueriesSm />Queries &amp; Connections</Small>
              <Small $off><PropsSm />Properties</Small>
              <Small $off><LinksSm />Edit Links</Small>
            </SmallCol>
          </GroupBody>
          <GroupLabel>Queries &amp; Connections</GroupLabel>
        </Group>

        <Group $w={206}>
          <GroupBody>
            <SortCol>
              <AzIcon top="A" bottom="Z" tc="#3f7fb5" bc="#7b4fa3" />
              <AzIcon top="Z" bottom="A" tc="#7b4fa3" bc="#3f7fb5" />
            </SortCol>
            <Big $w={44} $ml={-1}><SortIcon /><BigText>Sort</BigText></Big>
            <RibbonRule $m={3} />
            <Big $w={44}><FilterIcon /><BigText>Filter</BigText></Big>
            <SmallCol $ml={2}>
              <Small $off><ClearSm />Clear</Small>
              <Small $off><ReapplySm />Reapply</Small>
              <Small><AdvancedSm />Advanced</Small>
            </SmallCol>
          </GroupBody>
          <GroupLabel>Sort &amp; Filter</GroupLabel>
        </Group>

        <Group $w={438} $pad={4}>
          <GroupBody>
            <Big $w={52}><TextColsIcon /><BigText>Text to<br />Columns</BigText></Big>
            <Big $w={44}><FlashIcon /><BigText>Flash<br />Fill</BigText></Big>
            <Big $w={57}><DupIcon /><BigText>Remove<br />Duplicates</BigText></Big>
            <Big $w={66}><ValidIcon /><BigText>Data<br />Validation<Caret /></BigText></Big>
            <Big $w={68}><ConsolIcon /><BigText>Consolidate</BigText></Big>
            <Big $w={74}><RelIcon /><BigText $off>Relationships</BigText></Big>
            <Big $w={67}><ModelIcon /><BigText>Manage<br />Data Model</BigText></Big>
          </GroupBody>
          <GroupLabel $pad={4}>Data Tools</GroupLabel>
        </Group>

        <Group $w={113} $pad={4}>
          <GroupBody>
            <Big $w={56}><WhatIfIcon /><BigText>What-If<br />Analysis<Caret /></BigText></Big>
            <Big $w={48}><ForecastIcon /><BigText>Forecast<br />Sheet</BigText></Big>
          </GroupBody>
          <GroupLabel $pad={4}>Forecast</GroupLabel>
        </Group>

        <Group $w={244} $pad={4}>
          <GroupBody>
            <Big $w={42}><GroupIcon /><BigText>Group<br /><Caret /></BigText></Big>
            <Big $w={52}><UngroupIcon /><BigText>Ungroup<br /><Caret /></BigText></Big>
            <Big $w={50}><SubtotalIcon /><BigText>Subtotal</BigText></Big>
            <SmallCol $ml={2}>
              <Small $off><ShowSm />Show Detail</Small>
              <Small $off><HideSm />Hide Detail</Small>
            </SmallCol>
          </GroupBody>
          <GroupLabel $pad={4} $right={16}>Outline</GroupLabel>
        </Group>
        <Launcher viewBox="0 0 10 10" fill="none">
          <path d="M.5 7V.5H7" stroke="#888" />
          <path d="M4 4l5 5M9 5v4H5" stroke="#666" />
        </Launcher>
        <Chevron>
          <S $w={14} $h={10}><path d="M2 8l5-5 5 5" stroke="#555" strokeWidth="1.5" /></S>
        </Chevron>
      </Ribbon>

      <FormulaBar>
        <NameBox>B4<S $w={8} $h={5}><path d="M0 0h8L4 5z" fill="#777" /></S></NameBox>
        <Grip>⋮</Grip>
        <FxBox>
          <S $w={12} $h={12}><path d="M1 1l10 10M11 1 1 11" stroke="#bcbcbc" strokeWidth="1.5" /></S>
          <S $w={14} $h={12}><path d="M1 7l4 4 8-10" stroke="#bcbcbc" strokeWidth="1.5" /></S>
          <FxLabel>fx</FxLabel>
        </FxBox>
        <FormulaInput>
          <S $w={12} $h={8}><path d="M2 1l4 4 4-4" stroke="#666" strokeWidth="2" /></S>
        </FormulaInput>
      </FormulaBar>

      <Sheet />

      <TabsBar>
        <NavArrows>
          <Tri $dir="l" $c="#bbb" />
          <Tri $dir="r" $c="#bbb" />
        </NavArrows>
        <SheetTab $w={66} $on>Sheet1</SheetTab>
        <SheetTab $w={76}>Products</SheetTab>
        <AddSheet>+</AddSheet>
        <HDots>⋮</HDots>
        <HScroll>
          <HBtn $w={15}><Tri $dir="l" /></HBtn>
          <HThumb />
          <HTrack />
          <HBtn $w={15}><Tri $dir="r" /></HBtn>
        </HScroll>
      </TabsBar>

      <Status>
        <Ready>Ready</Ready>
        <Views>
          <ViewBtn $on>
            <S $w={16} $h={16}><path d="M.5.5h15v15H.5zM5.5.5v15M10.5.5v15M.5 5.5h15M.5 10.5h15" stroke="#777" /></S>
          </ViewBtn>
          <ViewBtn>
            <S $w={15} $h={14}><path d="M.5.5h14v13H.5zM3.5 3.5h8v7h-8zM5 6h5M5 8h5" stroke="#777" /></S>
          </ViewBtn>
          <ViewBtn>
            <S $w={15} $h={14}><path d="M.5.5h14v13H.5zM.5 9.5h14M5.5.5v9M9.5.5v9" stroke="#777" /></S>
          </ViewBtn>
          <ZoomCtl>
            <ZoomSign>-</ZoomSign>
            <ZoomTrack><ZoomKnob /></ZoomTrack>
            <ZoomSign>+</ZoomSign>
          </ZoomCtl>
          <ZoomPct>160%</ZoomPct>
        </Views>
      </Status>

      <Taskbar>
        <Slot $w={48}><WinLogo /></Slot>
        <Slot $w={48}><SearchIcon /></Slot>
        <Slot $w={48}><TaskView /></Slot>
        <SlotGap />
        <Slot $run><ChromeIcon badge="a" /></Slot>
        <Slot $run><ChromeIcon badge="b" /></Slot>
        <Slot $run><ChromeIcon badge="c" /></Slot>
        <Slot $run><WhatsApp /></Slot>
        <Slot $run><ChromeIcon badge="r" /></Slot>
        <Slot><FolderIcon /></Slot>
        <Slot><NotepadIcon /></Slot>
        <Slot $run><FilmoraIcon /></Slot>
        <Slot $run><WordIcon /></Slot>
        <Slot $run $on $w={48}><ExcelIcon /></Slot>
        <Tray>
          <Weather>
            <WeatherIcon />
            41°C&nbsp;&nbsp;Mostly cloudy
          </Weather>
          <TrayIcons>
            <TrayBox>
              <S $w={14} $h={8}><path d="M1 7l6-6 6 6" stroke="#eee" strokeWidth="1.3" /></S>
            </TrayBox>
            <TrayBox>
              <S $w={14} $h={18}><path d="M3 1h6M3 17h6" stroke="#ddd" /><rect x="1" y="5" width="9" height="8" rx="2" stroke="#ddd" /><path d="M11 7l3-1v6l-3-1z" stroke="#ddd" /></S>
            </TrayBox>
            <TrayBox>
              <S $w={12} $h={18}><rect x="3" y="0" width="6" height="12" rx="3" fill="#eee" /><path d="M1 8c0 6 10 6 10 0M6 14v3M3 17.5h6" stroke="#eee" /></S>
            </TrayBox>
            <TrayBox>
              <S $w={16} $h={14}><path d="M1 4.5h3l4-3v11l-4-3H1z" stroke="#ddd" /><path d="M10 4c1.5 1.5 1.5 4.5 0 6M12.5 2c2.5 3 2.5 7 0 10" stroke="#ddd" /></S>
            </TrayBox>
            <TrayBox>
              <S $w={16} $h={16}><path d="M4 .5h11.5v10H1M8 10.5v3.5M4 15h8M.5 2.5h4v4h-4z" stroke="#eee" /></S>
            </TrayBox>
          </TrayIcons>
          <Clock><span>6:54 pm</span><span>16/07/2024</span></Clock>
        </Tray>
      </Taskbar>
    </Page>
  );
}
